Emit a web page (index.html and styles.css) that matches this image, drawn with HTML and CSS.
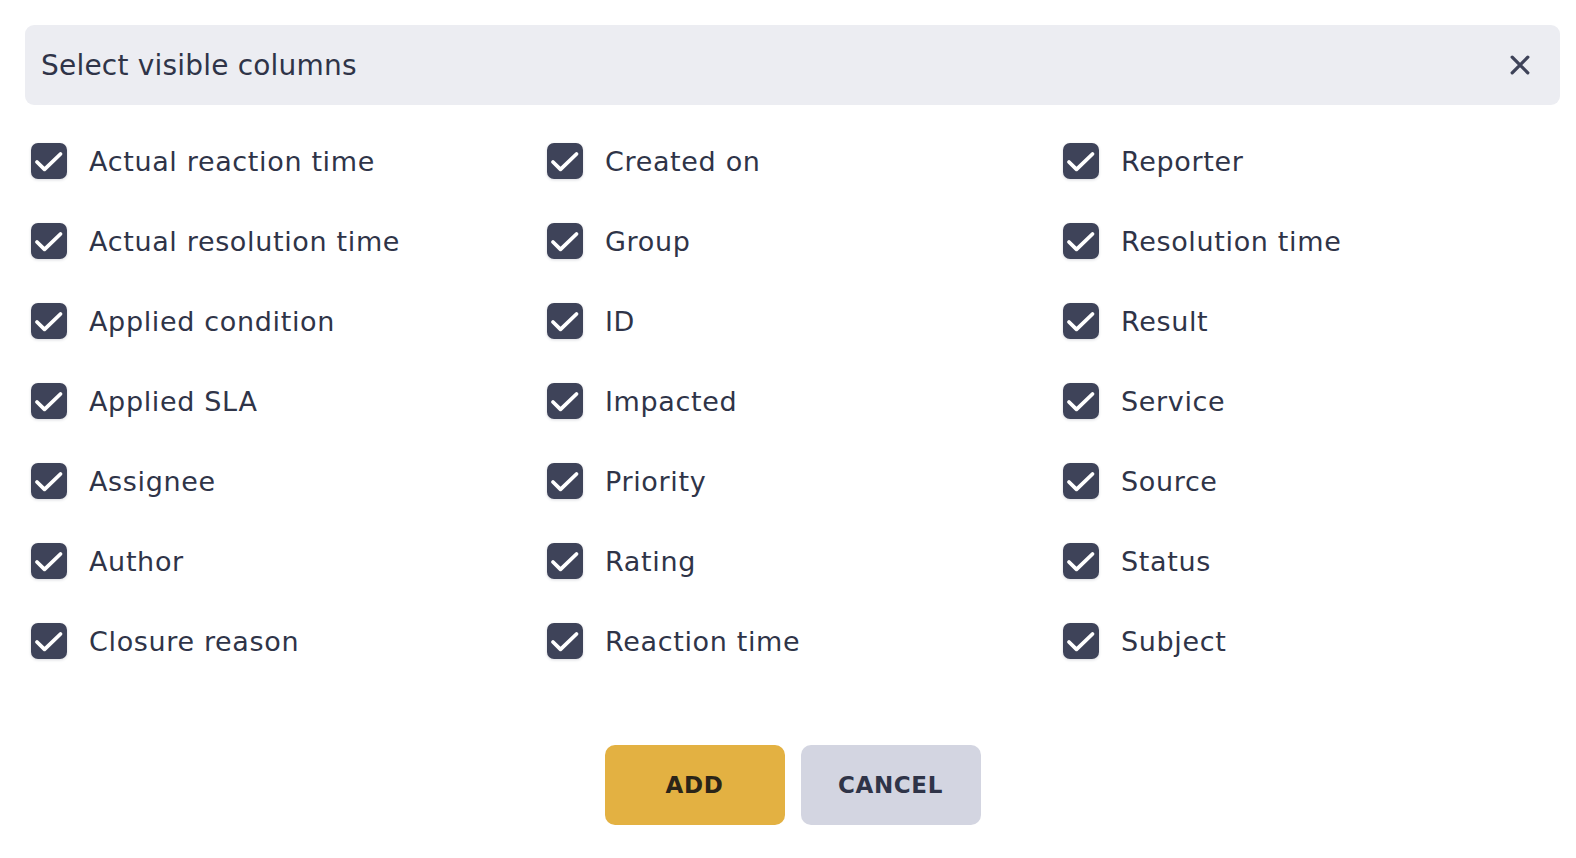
FILE: index.html
```html
<!DOCTYPE html>
<html lang="en">
<head>
<meta charset="utf-8">
<title>Select visible columns</title>
<link rel="stylesheet" href="styles.css">
</head>
<body>
<div class="dialog">
  <div class="dialog-header">
    <h1 class="dialog-title">Select visible columns</h1>
    <button class="close-btn" aria-label="Close">
      <svg viewBox="0 0 20 20" width="20" height="20"><path d="M2.2 2.2 L17.8 17.8 M17.8 2.2 L2.2 17.8" stroke="currentColor" stroke-width="3.3" stroke-linecap="round" fill="none"/></svg>
    </button>
  </div>
  <div class="columns-grid">
    <label class="col-item"><span class="cb"><svg viewBox="0 0 36 36"><path d="M6 19 L13.5 26.3 L29.5 11" /></svg></span><span class="cb-label">Actual reaction time</span></label>
    <label class="col-item"><span class="cb"><svg viewBox="0 0 36 36"><path d="M6 19 L13.5 26.3 L29.5 11" /></svg></span><span class="cb-label">Created on</span></label>
    <label class="col-item"><span class="cb"><svg viewBox="0 0 36 36"><path d="M6 19 L13.5 26.3 L29.5 11" /></svg></span><span class="cb-label">Reporter</span></label>

    <label class="col-item"><span class="cb"><svg viewBox="0 0 36 36"><path d="M6 19 L13.5 26.3 L29.5 11" /></svg></span><span class="cb-label">Actual resolution time</span></label>
    <label class="col-item"><span class="cb"><svg viewBox="0 0 36 36"><path d="M6 19 L13.5 26.3 L29.5 11" /></svg></span><span class="cb-label">Group</span></label>
    <label class="col-item"><span class="cb"><svg viewBox="0 0 36 36"><path d="M6 19 L13.5 26.3 L29.5 11" /></svg></span><span class="cb-label">Resolution time</span></label>

    <label class="col-item"><span class="cb"><svg viewBox="0 0 36 36"><path d="M6 19 L13.5 26.3 L29.5 11" /></svg></span><span class="cb-label">Applied condition</span></label>
    <label class="col-item"><span class="cb"><svg viewBox="0 0 36 36"><path d="M6 19 L13.5 26.3 L29.5 11" /></svg></span><span class="cb-label">ID</span></label>
    <label class="col-item"><span class="cb"><svg viewBox="0 0 36 36"><path d="M6 19 L13.5 26.3 L29.5 11" /></svg></span><span class="cb-label">Result</span></label>

    <label class="col-item"><span class="cb"><svg viewBox="0 0 36 36"><path d="M6 19 L13.5 26.3 L29.5 11" /></svg></span><span class="cb-label">Applied SLA</span></label>
    <label class="col-item"><span class="cb"><svg viewBox="0 0 36 36"><path d="M6 19 L13.5 26.3 L29.5 11" /></svg></span><span class="cb-label">Impacted</span></label>
    <label class="col-item"><span class="cb"><svg viewBox="0 0 36 36"><path d="M6 19 L13.5 26.3 L29.5 11" /></svg></span><span class="cb-label">Service</span></label>

    <label class="col-item"><span class="cb"><svg viewBox="0 0 36 36"><path d="M6 19 L13.5 26.3 L29.5 11" /></svg></span><span class="cb-label">Assignee</span></label>
    <label class="col-item"><span class="cb"><svg viewBox="0 0 36 36"><path d="M6 19 L13.5 26.3 L29.5 11" /></svg></span><span class="cb-label">Priority</span></label>
    <label class="col-item"><span class="cb"><svg viewBox="0 0 36 36"><path d="M6 19 L13.5 26.3 L29.5 11" /></svg></span><span class="cb-label">Source</span></label>

    <label class="col-item"><span class="cb"><svg viewBox="0 0 36 36"><path d="M6 19 L13.5 26.3 L29.5 11" /></svg></span><span class="cb-label">Author</span></label>
    <label class="col-item"><span class="cb"><svg viewBox="0 0 36 36"><path d="M6 19 L13.5 26.3 L29.5 11" /></svg></span><span class="cb-label">Rating</span></label>
    <label class="col-item"><span class="cb"><svg viewBox="0 0 36 36"><path d="M6 19 L13.5 26.3 L29.5 11" /></svg></span><span class="cb-label">Status</span></label>

    <label class="col-item"><span class="cb"><svg viewBox="0 0 36 36"><path d="M6 19 L13.5 26.3 L29.5 11" /></svg></span><span class="cb-label">Closure reason</span></label>
    <label class="col-item"><span class="cb"><svg viewBox="0 0 36 36"><path d="M6 19 L13.5 26.3 L29.5 11" /></svg></span><span class="cb-label">Reaction time</span></label>
    <label class="col-item"><span class="cb"><svg viewBox="0 0 36 36"><path d="M6 19 L13.5 26.3 L29.5 11" /></svg></span><span class="cb-label">Subject</span></label>
  </div>
  <div class="actions">
    <button class="btn btn-add">ADD</button>
    <button class="btn btn-cancel">CANCEL</button>
  </div>
</div>
</body>
</html>
```
FILE: styles.css
```css
* { box-sizing: border-box; }
html, body { margin: 0; padding: 0; background: #ffffff; }
body {
  font-family: "DejaVu Sans", "Open Sans", sans-serif;
  color: #2f3448;
}
.dialog {
  padding: 25px 16px 0 25px;
}
.dialog-header {
  height: 80px;
  background: #ecedf2;
  border-radius: 9px;
  display: flex;
  align-items: center;
  justify-content: space-between;
  padding: 0 30px 0 16px;
}
.dialog-title {
  margin: 0;
  font-size: 28px;
  font-weight: 500;
  color: #2f3448;
  letter-spacing: 0.2px;
}
.close-btn {
  border: 0;
  background: transparent;
  padding: 0;
  width: 20px;
  height: 20px;
  color: #3e4359;
  display: flex;
  cursor: pointer;
}
.columns-grid {
  margin-top: 16px;
  padding-left: 6px;
  display: grid;
  grid-template-columns: 516px 516px 1fr;
  grid-auto-rows: 80px;
}
.col-item {
  display: flex;
  align-items: center;
  gap: 22px;
}
.cb {
  width: 36px;
  height: 36px;
  flex: none;
  border-radius: 7px;
  background: #3e4359;
  box-shadow: 0 1px 3px rgba(40, 45, 70, 0.18);
  display: flex;
}
.cb svg {
  width: 36px;
  height: 36px;
}
.cb svg path {
  fill: none;
  stroke: #ffffff;
  stroke-width: 3.8;
  stroke-linecap: round;
  stroke-linejoin: round;
}
.cb-label {
  font-size: 27px;
  letter-spacing: 0.65px;
  color: #2f3448;
}
.actions {
  margin-top: 64px;
  display: flex;
  justify-content: center;
  gap: 16px;
}
.btn {
  width: 180px;
  height: 80px;
  border: 0;
  border-radius: 10px;
  font-family: "DejaVu Sans", "Open Sans", sans-serif;
  font-size: 23px;
  font-weight: 700;
  letter-spacing: 0.6px;
  cursor: pointer;
}
.btn-add {
  background: #e3b142;
  color: #2a2418;
}
.btn-cancel {
  background: #d3d5e1;
  color: #2f3448;
}
```
